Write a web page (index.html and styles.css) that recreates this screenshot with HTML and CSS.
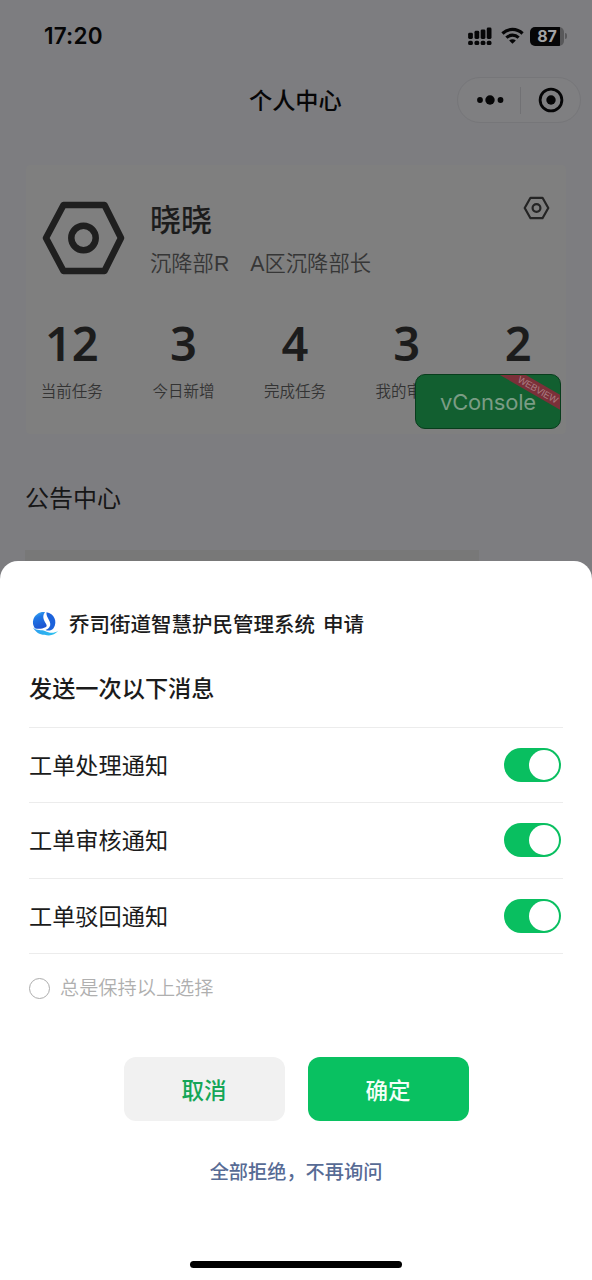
FILE: index.html
```html
<!DOCTYPE html>
<html lang="zh-CN">
<head>
<meta charset="utf-8">
<title>个人中心</title>
<link rel="stylesheet" href="styles.css">
</head>
<body>
<div class="screen">
  <header class="status">
    <span class="clock">17:20</span>
    <svg class="signal" width="24" height="19" viewBox="0 0 25 20" fill="#060607">
      <rect x="0" y="6" width="5" height="6.500" rx="1.500"/><rect x="6.700" y="4" width="5" height="8.500" rx="1.500"/><rect x="13.200" y="2.500" width="5" height="10" rx="1.500"/><rect x="19.600" y="0.500" width="5" height="12" rx="1.500"/>
      <rect x="0" y="14.500" width="5" height="4.500" rx="1.700"/><rect x="6.700" y="14.500" width="5" height="4.500" rx="1.700"/><rect x="13.200" y="14.500" width="5" height="4.500" rx="1.700"/><rect x="19.600" y="14.500" width="5" height="4.500" rx="1.700"/>
    </svg>
    <svg class="wifi" width="23" height="18" viewBox="0 0 24 18" fill="none" stroke="#060607" stroke-width="3.300">
      <path d="M1.500 6.400C7.500 .6 16.500 .6 22.500 6.400"/>
      <path d="M5.600 10.700C9.300 7.300 14.700 7.300 18.400 10.700"/>
      <path d="M8.500 13.700C10.500 12 13.500 12 15.500 13.700L12 17.200Z" fill="#060607" stroke="none"/>
    </svg>
    <span class="battery">87</span>
    <span class="battery-tip"></span>
  </header>
  <nav class="nav">
    <h1 class="nav-title">个人中心</h1>
    <div class="capsule">
      <svg class="dots" width="28" height="12" viewBox="0 0 28 12" fill="#060607"><circle cx="4" cy="6" r="2.900"/><circle cx="14" cy="6" r="4.700"/><circle cx="24.500" cy="6" r="2.900"/></svg>
      <span class="capsule-line"></span>
      <svg class="target" width="26" height="26" viewBox="0 0 26 26"><circle cx="13" cy="13" r="10.900" fill="none" stroke="#060607" stroke-width="2.800"/><circle cx="13" cy="13" r="4.700" fill="#060607"/></svg>
    </div>
  </nav>

  <section class="card">
    <div class="profile">
      <svg class="avatar" width="84" height="74" viewBox="0 0 84 74" fill="none" stroke="#1f1f1f"><path d="M21.500 4H62.500L79 37 62.500 70H21.500L4 37Z" stroke-width="6.500" stroke-linejoin="round"/><circle cx="41.500" cy="37" r="12.200" stroke-width="6.500"/></svg>
      <div class="who">
        <div class="name">晓晓</div>
        <div class="roles"><span>沉降部R</span><span>A区沉降部长</span></div>
      </div>
      <svg class="settings" width="27" height="24" viewBox="0 0 27 24" fill="none" stroke="#242424" stroke-width="2.200"><path d="M7.500 1.800H19.500L25.300 12 19.500 22.200H7.500L1.700 12Z" stroke-linejoin="round"/><circle cx="13.500" cy="12" r="3.900"/></svg>
    </div>
    <div class="stats">
      <div class="stat"><b>12</b><span>当前任务</span></div>
      <div class="stat"><b>3</b><span>今日新增</span></div>
      <div class="stat"><b>4</b><span>完成任务</span></div>
      <div class="stat"><b>3</b><span>我的审核</span></div>
      <div class="stat"><b>2</b></div>
    </div>
    <div class="vconsole">vConsole<span class="ribbon">WEBVIEW</span></div>
  </section>

  <h2 class="section-title">公告中心</h2>
  <div class="notice"></div>

  <div class="sheet">
    <div class="app">
      <svg class="logo" width="27" height="25" viewBox="0 0 27 25">
        <defs>
          <linearGradient id="sea" x1="0" y1="0" x2=".35" y2="1"><stop offset="0" stop-color="#45bdf5"/><stop offset=".4" stop-color="#1f78e6"/><stop offset="1" stop-color="#1d55d1"/></linearGradient>
          <linearGradient id="wave" x1="0" y1="0" x2="1" y2="0"><stop offset="0" stop-color="#2e9df0"/><stop offset="1" stop-color="#2bc6ee"/></linearGradient>
        </defs>
        <path d="M13 1C8 .3 3.300 3 1.500 8 .3 11.500 1 14.500 2.800 17.200 6 18.300 10 18 14 16 17.500 13.800 7.500 8.500 13 1Z" fill="url(#sea)"/>
        <path d="M14.500 1.200C13.500 6.500 21 11.500 17.300 16.200 16.200 17.600 15 18.300 13.500 19 16.500 20.300 19.800 19.500 21.500 17.200 26 10.500 22 2.300 14.500 1.200Z" fill="#1c62db"/>
        <path d="M1 16.500C5 20.300 9.500 18.300 13 20 17.500 22.400 22 22.500 26.300 19.800 22.500 24.200 18 25.300 12.500 23.800 7.500 23.800 3.500 21.200 1 16.500Z" fill="url(#wave)"/>
      </svg>
      <span class="app-name">乔司街道智慧护民管理系统</span><span class="app-verb">申请</span>
    </div>
    <div class="sheet-title">发送一次以下消息</div>
    <div class="row"><span>工单处理通知</span><i class="switch"></i></div>
    <div class="row"><span>工单审核通知</span><i class="switch"></i></div>
    <div class="row"><span>工单驳回通知</span><i class="switch"></i></div>
    <div class="keep"><i class="radio"></i><span>总是保持以上选择</span></div>
    <div class="actions"><button class="btn cancel">取消</button><button class="btn ok">确定</button></div>
    <a class="reject">全部拒绝，不再询问</a>
    <div class="home"></div>
  </div>
</div>
</body>
</html>
```
FILE: styles.css
```css
* { box-sizing: border-box; }
body { margin: 0; font-family: "Noto Sans CJK SC", sans-serif; }
.screen { position: relative; width: 592px; height: 1280px; overflow: hidden; background: #7d7d80; color: #1c1c1c; }

.status { display: flex; align-items: center; height: 72px; padding: 0 25px 0 44px; }
.clock { flex: 1; font: 600 22.5px/30px Inter, sans-serif; letter-spacing: .2px; color: #060607; }
.signal { margin-right: 9px; }
.wifi { margin-right: 6px; }
.battery { width: 34px; height: 19px; border-radius: 5px; background: linear-gradient(90deg, #060607 30px, #58585a 30px); color: #a3a3a5; font: 700 16px/19px Inter, sans-serif; text-align: center; }
.battery-tip { width: 2px; height: 6px; margin-left: 1px; border-radius: 0 2px 2px 0; background: #58585a; }

.nav { display: flex; align-items: center; height: 56px; padding: 0 11px 0 249px; }
.nav-title { flex: 1; margin: -2px 0 0; font-size: 23.200px; font-weight: 500; line-height: 32px; color: #060607; }
.capsule { display: flex; align-items: center; width: 124px; height: 46px; padding: 0 0 0 18px; border: 1px solid #767679; border-radius: 23px; background: #7f7f81; }
.capsule-line { flex: none; width: 1px; height: 27px; margin: 0 17px 0 16px; background: #717174; }
.dots, .target { flex: none; }

.card { position: relative; height: 269px; margin: 37px 26px 0; border-radius: 4px; background: #7f7f7f; }
.profile { display: flex; padding: 36px 16px 0 16px; }
.who { flex: 1; padding-left: 24px; }
.name { margin-top: -4px; font-size: 31px; font-weight: 500; line-height: 42px; }
.roles { display: flex; gap: 21px; margin-top: 11px; font-family: "Liberation Sans", "Noto Sans CJK SC", sans-serif; font-size: 21.300px; font-weight: 350; line-height: 28px; color: #363636; }
.settings { margin-top: -5px; }
.stats { display: grid; grid-template-columns: repeat(5, 111.600px); margin: 40px 0 0 -10px; }
.stat { display: flex; flex-direction: column; align-items: center; }
.stat b { font: 600 47px/50px "Noto Sans", sans-serif; }
.stat span { margin-top: 11px; font-size: 15.500px; font-weight: 350; line-height: 22px; color: #333; }
.vconsole { position: absolute; left: 389px; top: 209px; width: 146px; height: 55px; border: 1px solid #083d1c; border-radius: 10px; background: #125f30; overflow: hidden; color: #7b9c85; font: 400 22px/55px Inter, sans-serif; letter-spacing: -.2px; text-align: center; }
.ribbon { position: absolute; right: -23px; top: 8px; width: 90px; height: 13px; background: #7b3039; color: #a87c82; font: 400 9.500px/13px "Liberation Sans", sans-serif; letter-spacing: -.2px; transform: rotate(30deg); }

.section-title { margin: 46px 0 0 25px; font-size: 24px; font-weight: 400; line-height: 34px; color: #161617; }
.notice { width: 454px; height: 40px; margin: 36px 0 0 25px; background: #787878; }

.sheet { position: absolute; left: 0; top: 561px; display: flex; flex-direction: column; width: 592px; height: 719px; padding: 0 29px; border-radius: 18px 18px 0 0; background: #fff; color: #1b1b1b; }
.app { display: flex; align-items: center; height: 30px; margin-top: 47px; padding-left: 3px; font-size: 20.500px; font-weight: 500; line-height: 30px; }
.app-name { margin-left: 10px; }
.app-verb { margin-left: 8px; }
.sheet-title { height: 79.500px; margin-top: 9px; padding-top: 24.500px; font-size: 23.200px; font-weight: 500; line-height: 30px; }
.row { display: flex; align-items: center; justify-content: space-between; height: 75.600px; padding-right: 2px; border-top: 1px solid #ececec; font-size: 23.200px; font-weight: 400; }
.row span { margin-top: -2px; }
.switch { width: 57px; height: 34px; padding: 2px; border-radius: 17px; background: #09bf60; }
.switch::before { content: ""; display: block; width: 30px; height: 30px; margin-left: 23px; border-radius: 50%; background: #fff; }
.keep { display: flex; align-items: center; height: 70px; border-top: 1px solid #ececec; color: #afafaf; font-size: 19.200px; font-weight: 350; }
.keep span { margin-top: -3px; }
.radio { width: 21px; height: 21px; margin: -1px 10px 0 0; border: 1.500px solid #acacac; border-radius: 50%; }
.actions { display: flex; justify-content: center; gap: 23px; margin-top: 34px; }
.btn { width: 161px; height: 64px; padding: 0; border: 0; border-radius: 12px; font: 500 22.500px/64px "Noto Sans CJK SC", sans-serif; }
.cancel { background: #f1f1f1; color: #15a657; }
.ok { background: #09c161; color: #f4fff8; }
.reject { align-self: center; margin-top: 35px; font-size: 19.200px; font-weight: 500; line-height: 30px; color: #576b95; }
.home { align-self: center; width: 212px; height: 7px; margin-top: auto; margin-bottom: 12px; border-radius: 4px; background: #000; }
```
